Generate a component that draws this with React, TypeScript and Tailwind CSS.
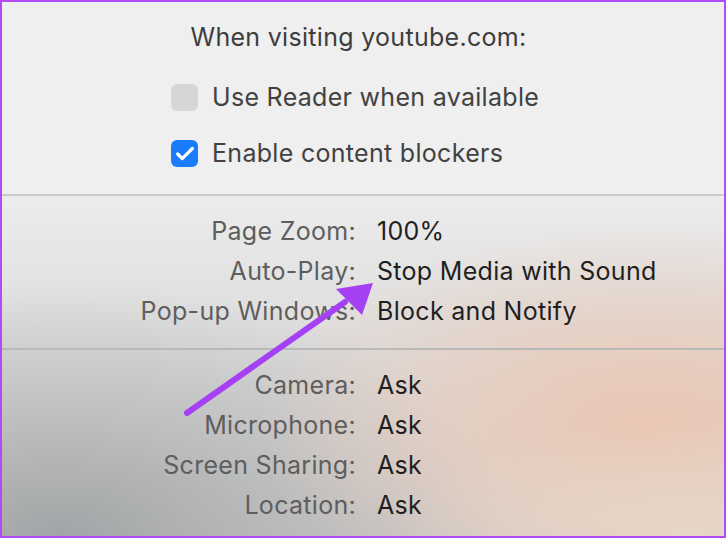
import { Check } from "lucide-react";

const font = { fontFamily: "Inter, 'Noto Sans', sans-serif" };

function Row(props: { label: string; value: string }) {
  return (
    <>
      <span className="text-right text-[#5e5e5e] leading-[40px]">{props.label}</span>
      <span className="text-[#1f1f1f] leading-[40px]">{props.value}</span>
    </>
  );
}

export default function App() {
  return (
    <div
      className="relative w-[726px] h-[538px] border-2 border-[#b04bf6] flex flex-col overflow-hidden text-[25px] tracking-[0.3px]"
      style={font}
    >
      <div className="h-[192px] bg-[#efefef] flex flex-col">
        <p className="pt-[20px] pr-[9px] text-center text-[#3d3d3d] leading-[30px]">
          When visiting youtube.com:
        </p>
        <div className="flex flex-col gap-[29px] pl-[169px] pt-[32px]">
          <label className="flex items-center gap-[14px] text-[#424242]">
            <span className="w-[27px] h-[27px] rounded-[6px] bg-[#d6d6d6]" />
            <span className="leading-[27px]">Use Reader when available</span>
          </label>
          <label className="flex items-center gap-[14px] text-[#424242]">
            <span className="w-[27px] h-[27px] rounded-[6px] bg-[#1a7cf9] flex items-center justify-center">
              <Check className="text-white" size={22} strokeWidth={3.5} />
            </span>
            <span className="leading-[27px]">Enable content blockers</span>
          </label>
        </div>
      </div>
      <div className="h-[2px] bg-[#cbcbcb]" />
      <div className="flex-1 flex flex-col bg-[linear-gradient(180deg,#ececec_0%,#dcdcdc_45%,#c9c9c9_100%)] relative">
        <div className="absolute inset-0 bg-[radial-gradient(ellipse_65%_75%_at_8%_100%,rgba(160,163,165,0.95)_0%,rgba(170,172,173,0.55)_45%,rgba(200,200,200,0)_100%)]" />
        <div className="absolute inset-0 bg-[radial-gradient(ellipse_55%_60%_at_90%_68%,rgba(234,198,180,1)_0%,rgba(232,205,190,0.8)_45%,rgba(230,220,212,0)_100%)]" />
        <div className="absolute inset-0 bg-[radial-gradient(ellipse_40%_35%_at_95%_100%,rgba(232,216,200,0.9)_0%,rgba(232,216,200,0)_100%)]" />
        <div className="relative grid grid-cols-[354px_auto] auto-rows-[40px] content-start gap-x-[21px] pt-[15px] h-[152px]">
          <Row label="Page Zoom:" value="100%" />
          <Row label="Auto-Play:" value="Stop Media with Sound" />
          <Row label="Pop-up Windows:" value="Block and Notify" />
        </div>
        <div className="relative h-[2px] bg-[#b9b9b9]" />
        <div className="relative grid grid-cols-[354px_auto] auto-rows-[40px] content-start gap-x-[21px] pt-[15px]">
          <Row label="Camera:" value="Ask" />
          <Row label="Microphone:" value="Ask" />
          <Row label="Screen Sharing:" value="Ask" />
          <Row label="Location:" value="Ask" />
        </div>
      </div>
      <svg
        className="absolute left-[-2px] top-[-2px] pointer-events-none"
        width="726"
        height="538"
        viewBox="0 0 726 538"
      >
        <line x1="187" y1="413" x2="345" y2="302" stroke="#a640f5" strokeWidth="6" strokeLinecap="round" />
        <polygon points="373,283 336,289 362,315" fill="#a640f5" />
      </svg>
    </div>
  );
}
